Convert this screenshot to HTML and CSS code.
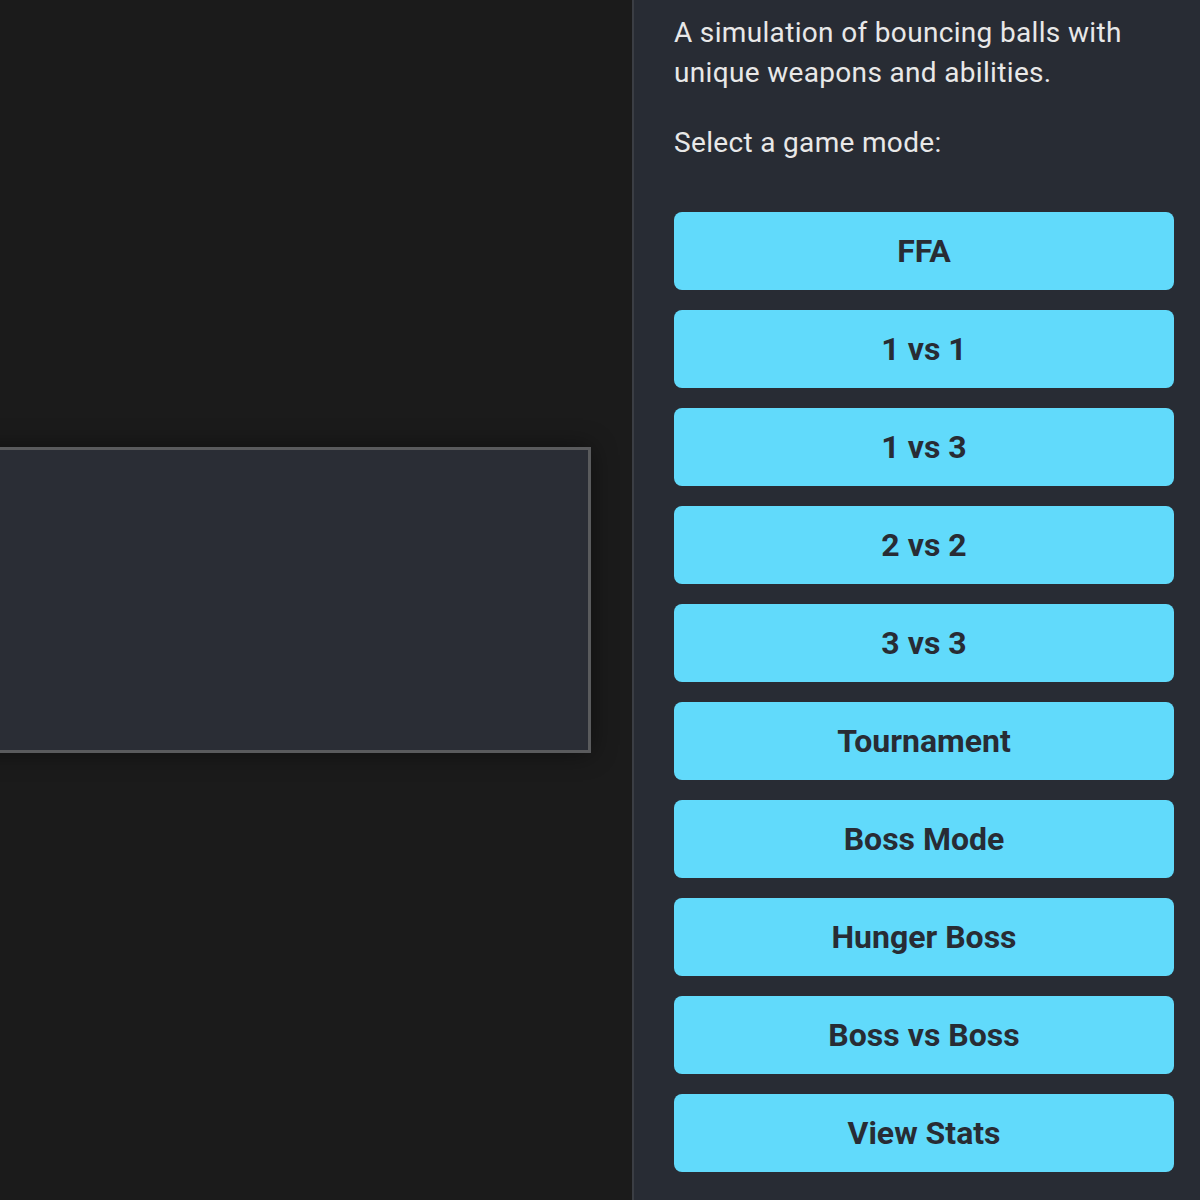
FILE: index.html
```html
<!DOCTYPE html>
<html lang="en">
<head>
<meta charset="utf-8">
<title>Bouncing Balls</title>
<link rel="stylesheet" href="styles.css">
</head>
<body>
<div class="app">
  <main class="stage">
    <div class="arena"></div>
  </main>
  <aside class="sidebar">
    <p class="intro">A simulation of bouncing balls with unique weapons and abilities.</p>
    <p class="prompt">Select a game mode:</p>
    <div class="modes">
      <button class="mode">FFA</button>
      <button class="mode">1 vs 1</button>
      <button class="mode">1 vs 3</button>
      <button class="mode">2 vs 2</button>
      <button class="mode">3 vs 3</button>
      <button class="mode">Tournament</button>
      <button class="mode">Boss Mode</button>
      <button class="mode">Hunger Boss</button>
      <button class="mode">Boss vs Boss</button>
      <button class="mode">View Stats</button>
    </div>
  </aside>
</div>
</body>
</html>
```
FILE: styles.css
```css
html, body {
  margin: 0;
  padding: 0;
  background: #1b1b1b;
  font-family: Roboto, "Liberation Sans", sans-serif;
}

.app {
  display: flex;
  width: 1200px;
  height: 1200px;
  overflow: hidden;
}

.stage {
  flex: 1;
  display: flex;
  align-items: center;
  justify-content: flex-end;
  padding-right: 41px;
  overflow: hidden;
  background: #1b1b1b;
}

.arena {
  flex-shrink: 0;
  width: 800px;
  height: 300px;
  border: 3px solid #5a5b5d;
  background: #2a2d35;
  box-shadow: 0 0 24px rgba(0, 0, 0, 0.45);
}

.sidebar {
  width: 526px;
  flex-shrink: 0;
  box-sizing: content-box;
  background: #282c34;
  border-left: 2px solid #3b3e44;
  padding: 13px 0 0 40px;
  color: #e8e8e8;
}

.intro,
.prompt {
  font-size: 28px;
  line-height: 40px;
  letter-spacing: 0.33px;
  margin: 0;
}

.prompt {
  margin-top: 30px;
}

.modes {
  display: flex;
  flex-direction: column;
  gap: 20px;
  margin-top: 49px;
  width: 500px;
}

.mode {
  height: 78px;
  border: none;
  border-radius: 8px;
  background: #61dafb;
  color: #282c34;
  font-family: Roboto, "Liberation Sans", sans-serif;
  font-weight: 700;
  font-size: 32px;
  padding: 0;
  cursor: pointer;
}
```
